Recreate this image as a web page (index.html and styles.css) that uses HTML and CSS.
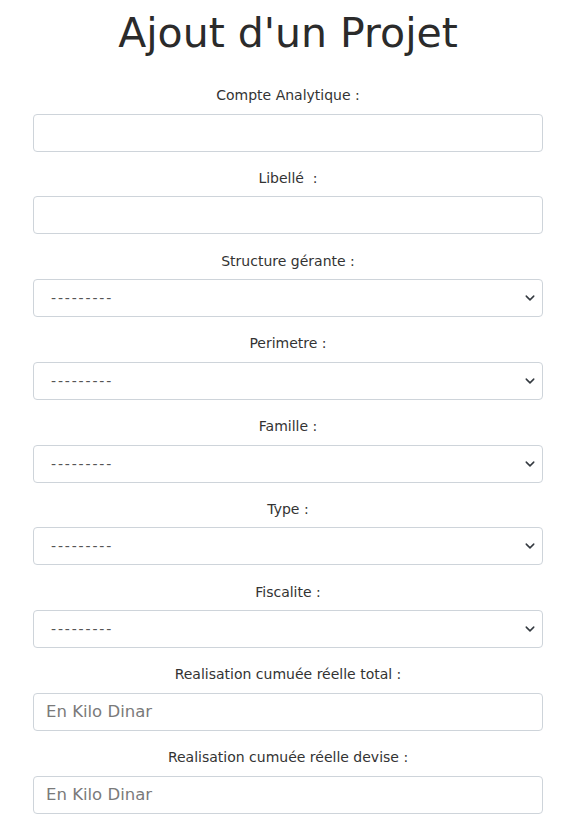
FILE: index.html
```html
<!DOCTYPE html>
<html lang="fr">
<head>
<meta charset="utf-8">
<title>Ajout d'un Projet</title>
<link rel="stylesheet" href="styles.css">
</head>
<body>
<div class="page">
  <h1 class="title">Ajout d'un Projet</h1>
  <form class="form">
    <div class="group">
      <label class="label">Compte Analytique :</label>
      <input class="control" type="text">
    </div>
    <div class="group">
      <label class="label">Libellé &nbsp;:</label>
      <input class="control" type="text">
    </div>
    <div class="group">
      <label class="label">Structure gérante :</label>
      <div class="select"><span>---------</span><svg class="chev" viewBox="0 0 16 16" width="10" height="10"><path d="M2 5l6 6 6-6" fill="none" stroke="#343a40" stroke-width="2.4" stroke-linecap="round" stroke-linejoin="round"/></svg></div>
    </div>
    <div class="group">
      <label class="label">Perimetre :</label>
      <div class="select"><span>---------</span><svg class="chev" viewBox="0 0 16 16" width="10" height="10"><path d="M2 5l6 6 6-6" fill="none" stroke="#343a40" stroke-width="2.4" stroke-linecap="round" stroke-linejoin="round"/></svg></div>
    </div>
    <div class="group">
      <label class="label">Famille :</label>
      <div class="select"><span>---------</span><svg class="chev" viewBox="0 0 16 16" width="10" height="10"><path d="M2 5l6 6 6-6" fill="none" stroke="#343a40" stroke-width="2.4" stroke-linecap="round" stroke-linejoin="round"/></svg></div>
    </div>
    <div class="group">
      <label class="label">Type :</label>
      <div class="select"><span>---------</span><svg class="chev" viewBox="0 0 16 16" width="10" height="10"><path d="M2 5l6 6 6-6" fill="none" stroke="#343a40" stroke-width="2.4" stroke-linecap="round" stroke-linejoin="round"/></svg></div>
    </div>
    <div class="group">
      <label class="label">Fiscalite :</label>
      <div class="select"><span>---------</span><svg class="chev" viewBox="0 0 16 16" width="10" height="10"><path d="M2 5l6 6 6-6" fill="none" stroke="#343a40" stroke-width="2.4" stroke-linecap="round" stroke-linejoin="round"/></svg></div>
    </div>
    <div class="group">
      <label class="label">Realisation cumuée réelle total :</label>
      <input class="control" type="text" placeholder="En Kilo Dinar">
    </div>
    <div class="group">
      <label class="label">Realisation cumuée réelle devise :</label>
      <input class="control" type="text" placeholder="En Kilo Dinar">
    </div>
  </form>
</div>
</body>
</html>
```
FILE: styles.css
```css
html, body {
  margin: 0;
  padding: 0;
  background: #fff;
}
body {
  font-family: "DejaVu Sans", Verdana, sans-serif;
  color: #333;
  overflow: hidden;
}
.page {
  width: 510px;
  margin-left: 33px;
}
.title {
  margin: 0;
  padding-top: 9px;
  height: 76px;
  font-size: 41px;
  font-weight: normal;
  line-height: 48px;
  text-align: center;
  color: #2b2b2b;
}
.form {
  display: flex;
  flex-direction: column;
}
.group {
  display: flex;
  flex-direction: column;
  margin-bottom: 16.25px;
}
.label {
  font-size: 14px;
  line-height: 20.75px;
  text-align: center;
  margin-bottom: 7.75px;
}
.control, .select {
  box-sizing: border-box;
  height: 38px;
  width: 100%;
  border: 1px solid #ced4da;
  border-radius: 4px;
  background: #fff;
  font-family: "DejaVu Sans", Verdana, sans-serif;
  font-size: 16.5px;
  padding: 0 12px;
  color: #333;
  margin: 0;
}
.control::placeholder {
  color: #7a7a7a;
}
.select {
  display: flex;
  align-items: center;
  justify-content: space-between;
  font-size: 14px;
  padding-left: 17px;
  padding-right: 7px;
}
.select span {
  color: #555;
  letter-spacing: 1.85px;
}
.chev {
  display: block;
}
```
